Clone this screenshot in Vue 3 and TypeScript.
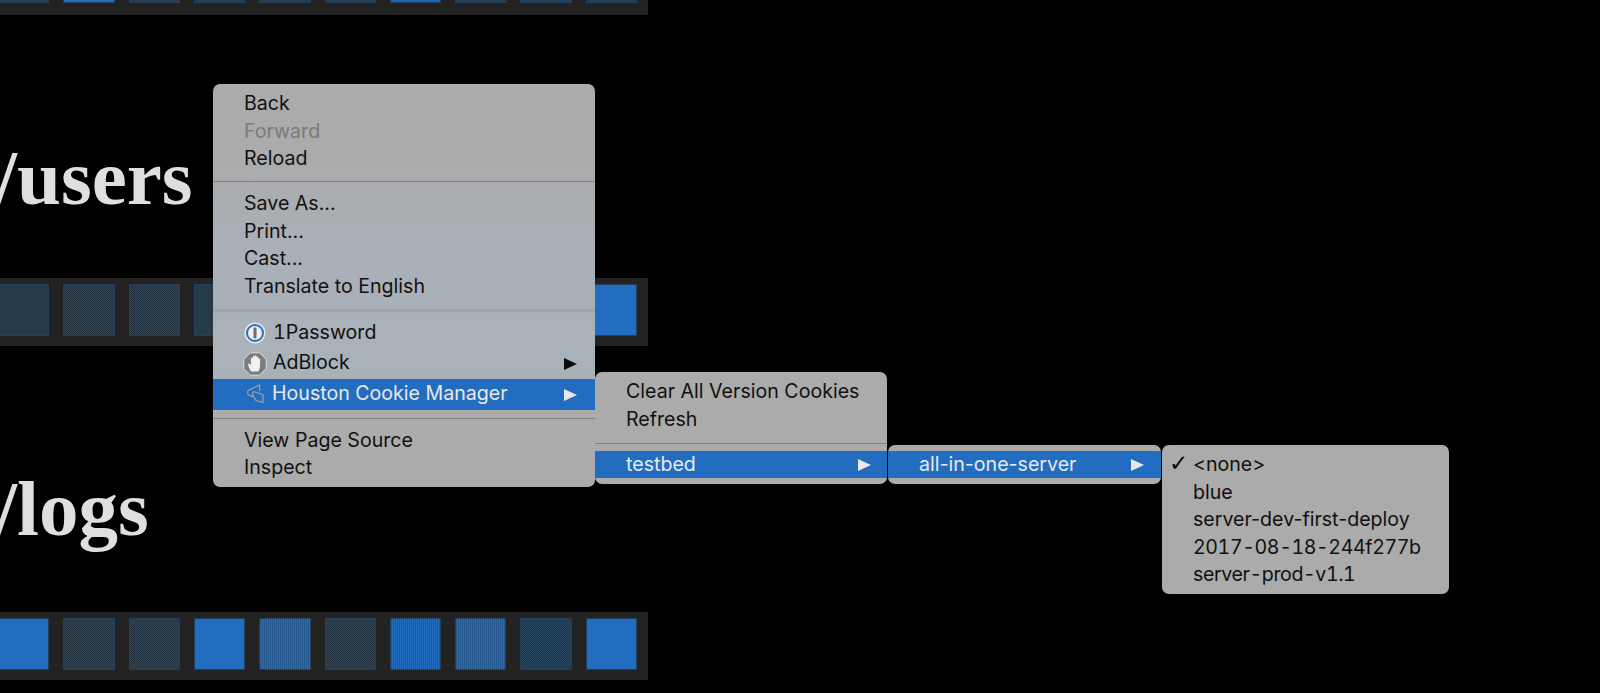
<script setup lang="ts">
type Tile = 'blue' | 'mid' | 'dark' | 'dim'

const topTiles: Tile[] = ['dim', 'blue', 'dim', 'dim', 'dim', 'dim', 'mid', 'dim', 'dim', 'dim']
const usersTiles: Tile[] = ['dark', 'dim', 'dim', 'dark', 'dim', 'dim', 'dim', 'dim', 'dim', 'blue']
const logsTiles: Tile[] = ['blue', 'dim', 'dim', 'blue', 'mid', 'dim', 'mid', 'mid', 'dim', 'blue']
</script>

<template>
  <div class="page">
    <div class="bar bar-top">
      <div v-for="(t, i) in topTiles" :key="i" class="tile" :class="t"></div>
    </div>
    <h1 class="title title-users">/users</h1>
    <div class="bar">
      <div v-for="(t, i) in usersTiles" :key="i" class="tile" :class="t"></div>
    </div>
    <h1 class="title title-logs">/logs</h1>
    <div class="bar">
      <div v-for="(t, i) in logsTiles" :key="i" class="tile" :class="t"></div>
    </div>

    <div class="menu menu-main">
      <div class="item">Back</div>
      <div class="item disabled">Forward</div>
      <div class="item">Reload</div>
      <div class="sep"></div>
      <div class="item">Save As...</div>
      <div class="item">Print...</div>
      <div class="item">Cast...</div>
      <div class="item">Translate to English</div>
      <div class="sep sep-thick"></div>
      <div class="item icon-item">
        <svg class="icon" viewBox="0 0 24 24">
          <circle cx="12" cy="12" r="10.6" fill="#e4e6e8" />
          <circle cx="12" cy="12" r="8" fill="#f0f1f2" stroke="#2a6fc2" stroke-width="2" />
          <rect x="10.5" y="6.5" width="3" height="11" rx="1" fill="#6d6d6d" />
        </svg>
        <span class="onepass">1Password</span>
      </div>
      <div class="item icon-item">
        <svg class="icon" viewBox="0 0 24 24">
          <polygon points="7.4,0.8 16.6,0.8 23.2,7.4 23.2,16.6 16.6,23.2 7.4,23.2 0.8,16.6 0.8,7.4" fill="#7f7b79" stroke="#dfdfdf" stroke-width="1" />
          <path d="M8 19.5 C6.6 17 5.4 14.5 5 12 L6.8 11.4 L8 13.6 L8 6.4 C8 5.4 9.6 5.4 9.6 6.4 L9.9 4.6 C9.9 3.6 11.4 3.6 11.5 4.6 L11.9 4 C11.9 3 13.5 3 13.6 4 L13.8 5.4 C13.9 4.4 15.4 4.4 15.4 5.4 L15.6 7.2 C15.8 6.3 17.2 6.4 17.2 7.4 L17 14 C16.9 16.5 16 18.2 15.4 19.5 Z" fill="#f0f0f0" />
        </svg>
        <span class="ad">AdBlock</span>
        <span class="arrow"></span>
      </div>
      <div class="item icon-item active">
        <svg class="icon" viewBox="0 0 24 24" fill="none" stroke="#a9a6a8" stroke-width="1.1" stroke-linejoin="round">
          <path d="M4.7 7.8 L16.5 2 L17 8 M4.7 7.8 L5 11.5 L10 14" />
          <path d="M10 8.5 L20 11.5 L20 19.5 L13 17.5 L9.5 11.5 Z" />
        </svg>
        <span class="houston">Houston Cookie Manager</span>
        <span class="arrow"></span>
      </div>
      <div class="sep sep-low"></div>
      <div class="item">View Page Source</div>
      <div class="item">Inspect</div>
    </div>

    <div class="menu menu-houston">
      <div class="item">Clear All Version Cookies</div>
      <div class="item">Refresh</div>
      <div class="sep"></div>
      <div class="item active short">testbed<span class="arrow"></span></div>
    </div>

    <div class="menu menu-server">
      <div class="item active short">all-in-one-server<span class="arrow"></span></div>
    </div>

    <div class="menu menu-version">
      <div class="item"><span class="check">✓</span>&lt;none&gt;</div>
      <div class="item">blue</div>
      <div class="item">server-dev-first-deploy</div>
      <div class="item num">2017-08-18-244f277b</div>
      <div class="item num">server-prod-v1.1</div>
    </div>
  </div>
</template>

<style scoped>
.page {
  position: relative;
  width: 1600px;
  height: 693px;
  overflow: hidden;
  background: #000;
}
.bar {
  width: 648px;
  height: 68px;
  background: #222;
  display: flex;
  gap: 14px;
  justify-content: flex-end;
  align-items: flex-start;
  padding: 6px 11px 0 0;
  box-sizing: border-box;
}
.bar-top {
  height: 15px;
  padding: 0 11px 12px 0;
  align-items: flex-end;
}
.tile {
  flex: 0 0 51.3px;
  height: 51.5px;
  box-shadow: inset 0 0 0 1px #24405c;
}
.tile.blue { background: #236dc1; }
.tile.mid { background: repeating-linear-gradient(90deg, #236dc1 0 1px, #24578f 1px 2px); }
.tile.dark { background: #24394a; }
.tile.dim { background: repeating-conic-gradient(#1f2f3d 0 25%, #2a4a62 0 50%) 0 0 / 2px 2px; }
.title {
  margin: 0 0 0 -5px;
  color: #dedfe0;
  font-family: "Liberation Serif", "DejaVu Serif", serif;
  font-weight: 700;
  font-size: 79px;
  line-height: 90px;
  white-space: nowrap;
}
.title-users { padding: 118px 0 55px; }
.title-logs { padding: 118px 0 58px; }

.menu {
  position: absolute;
  box-sizing: border-box;
  border-radius: 7px;
  background: #ababab;
  font-family: Inter, "Noto Sans", sans-serif;
  font-size: 19.6px;
  color: #111;
  overflow: hidden;
}
.menu-main {
  left: 213px;
  top: 84px;
  width: 382px;
  height: 403px;
  padding-top: 6px;
  background: linear-gradient(180deg, #ababab 0%, #ababab 18%, #a9b0b7 42%, #a9b2ba 70%, #ababab 82%, #ababab 100%);
}
.menu-houston {
  left: 595px;
  top: 372px;
  width: 292px;
  height: 112px;
  padding-top: 6px;
}
.menu-server {
  left: 888px;
  top: 445px;
  width: 273px;
  height: 39px;
  padding-top: 6px;
}
.menu-version {
  left: 1162px;
  top: 445px;
  width: 287px;
  height: 149px;
  padding-top: 6px;
}
.item {
  position: relative;
  height: 27.5px;
  line-height: 27.5px;
  padding-left: 31px;
  white-space: nowrap;
}
.num {
  font-variant-numeric: tabular-nums;
  letter-spacing: -0.4px;
}
.disabled { color: #7c7a78; }
.icon-item {
  height: 31px;
  line-height: 31px;
  display: flex;
  align-items: center;
  padding-left: 30px;
}
.icon {
  flex: 0 0 24px;
  height: 24px;
}
.icon-item .onepass {
  margin: 0 0 0 6px;
  font-variant-numeric: tabular-nums;
}
.icon-item .ad { margin: 0 0 2px 6px; }
.icon-item .houston { margin: 0 0 2px 5px; }
.active {
  background: #236dc1;
  color: #e8e8e8;
}
.short { height: 27px; line-height: 27px; }
.arrow {
  position: absolute;
  right: 18px;
  top: 50%;
  margin-top: -6px;
  width: 0;
  height: 0;
  border-left: 13px solid #0c0c0c;
  border-top: 6px solid transparent;
  border-bottom: 6px solid transparent;
}
.active .arrow { border-left-color: #e8e8e8; }
.menu-houston .arrow { right: 16px; }
.menu-server .arrow { right: 17px; }
.sep {
  height: 1px;
  margin: 8.5px 0 8px;
  background: #7f7f7f;
}
.sep-thick {
  height: 3px;
  margin: 8.5px 0 5.5px;
  background: #a5a3a2;
}
.sep-low { margin: 7.5px 0 8px; }
.menu-houston .sep { margin: 9.5px 0 7.5px; }
.check {
  position: absolute;
  left: 7px;
  top: -1px;
  font-family: "DejaVu Sans", sans-serif;
  font-size: 23px;
  font-weight: 700;
  color: #0c0c0c;
}
</style>

<style>
html, body { background: #000; }
</style>
